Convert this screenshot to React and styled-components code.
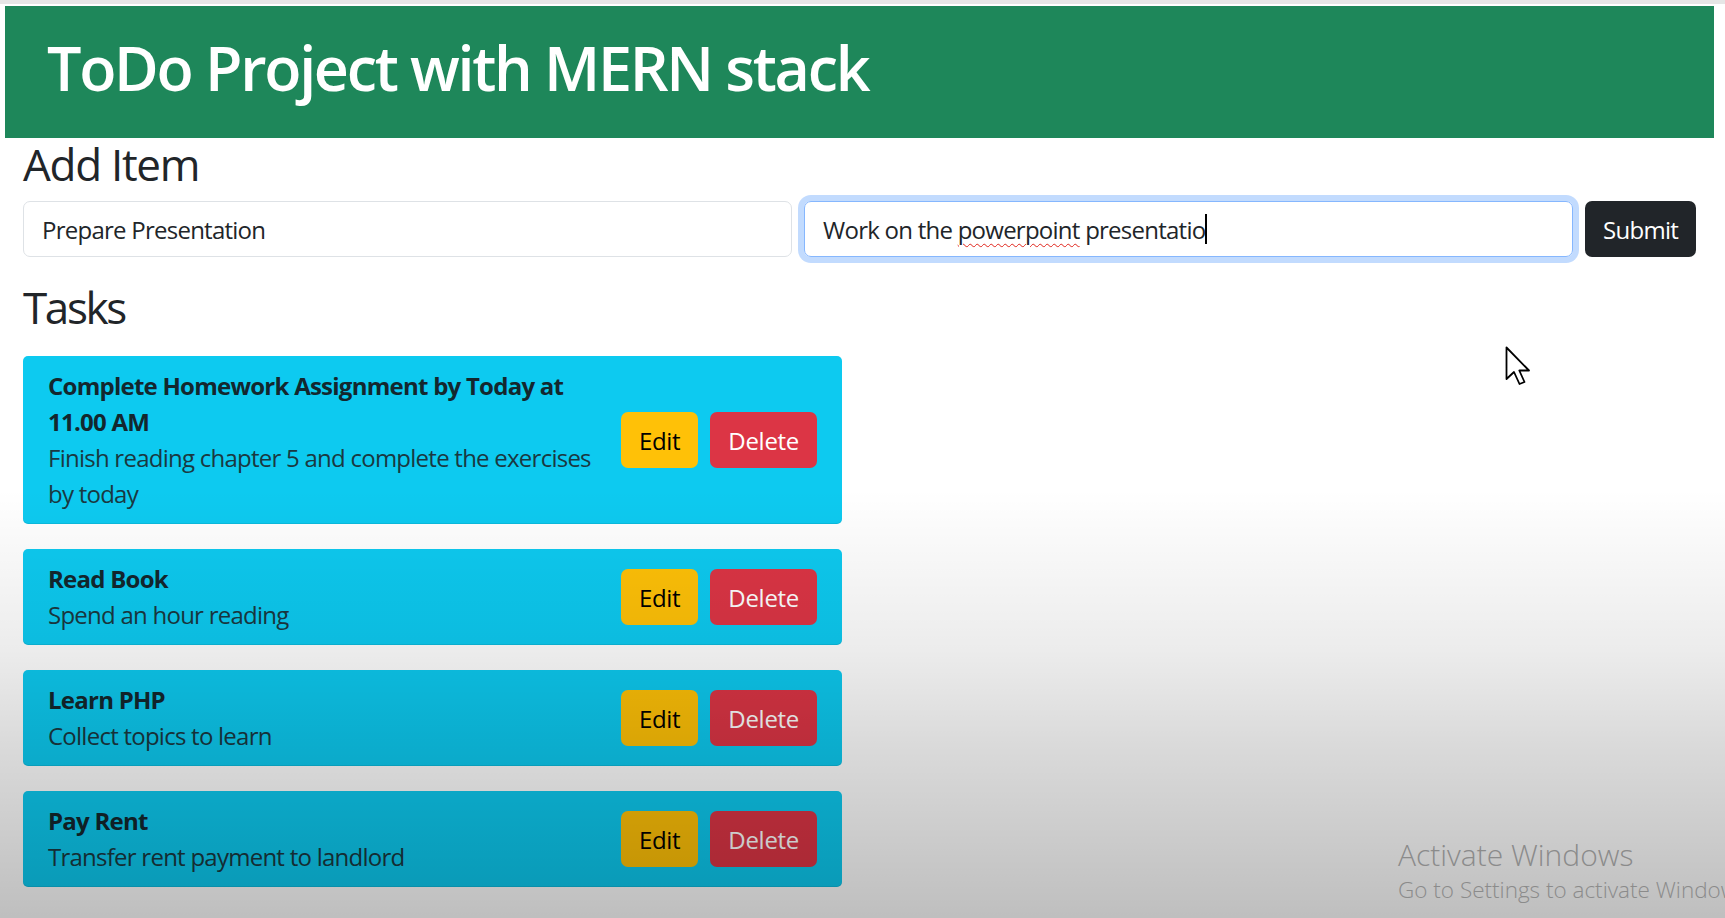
import React from 'react';
import styled, { createGlobalStyle } from 'styled-components';

const GlobalStyle = createGlobalStyle`
  html, body {
    margin: 0;
    padding: 0;
    background: #fff;
    overflow: hidden;
  }
  body {
    font-family: "Open Sans", "Noto Sans", sans-serif;
    color: #212529;
    letter-spacing: -0.75px;
  }
`;

const Page = styled.div`
  position: relative;
  min-height: 918px;
  border-top: 4px solid #e6e6e6;
  padding-top: 2px;
`;

const Header = styled.header`
  margin: 0 11px 0 5px;
  background: #1e875a;
  padding: 26px 42px 34px;
`;

const Title = styled.h1`
  margin: 0;
  color: #fff;
  font-size: 61px;
  font-weight: 600;
  line-height: 72px;
  letter-spacing: -2.3px;
`;

const Content = styled.main`
  padding: 0 29px 0 23px;
`;

const SectionTitle = styled.h2`
  margin: ${(p) => p.$margin};
  font-size: 44px;
  font-weight: 500;
  line-height: 52px;
  letter-spacing: ${(p) => p.$tracking || '-1.3px'};
`;

const FormRow = styled.div`
  display: flex;
  gap: 12px;
`;

const Field = styled.div`
  flex: 1;
  height: 56px;
  box-sizing: border-box;
  display: flex;
  align-items: center;
  padding: 0 18px;
  border: 1px solid ${(p) => (p.$focused ? '#86b7fe' : '#dee2e6')};
  border-radius: 7px;
  box-shadow: ${(p) => (p.$focused ? '0 0 0 6px rgba(13, 110, 253, 0.25)' : 'none')};
  font-size: 24px;
  white-space: pre;
  color: #212529;
`;

const Misspelt = styled.span`
  text-decoration: underline wavy #e0241b;
  text-decoration-thickness: 1px;
  text-underline-offset: 4px;
`;

const Caret = styled.span`
  display: inline-block;
  width: 2px;
  height: 30px;
  background: #000;
  vertical-align: middle;
`;

const SubmitButton = styled.button`
  height: 56px;
  padding: 0 18px;
  border: none;
  border-radius: 7px;
  background: #212529;
  color: #fff;
  font-family: inherit;
  font-size: 24px;
  letter-spacing: -0.75px;
`;

const TaskList = styled.div`
  width: 819px;
  display: flex;
  flex-direction: column;
  gap: 25px;
`;

const Card = styled.div`
  display: flex;
  align-items: center;
  gap: 12px;
  padding: 12px 25px;
  background: #0dcaf0;
  border-radius: 5px;
  box-shadow: inset 0 -1px 0 rgba(0, 0, 0, 0.08);
`;

const CardText = styled.div`
  flex: 1;
  font-size: 24px;
  line-height: 36px;
`;

const TaskName = styled.div`
  font-weight: 700;
  color: #13272e;
`;

const TaskDesc = styled.div`
  color: #1a3841;
`;

const Actions = styled.div`
  display: flex;
  gap: 12px;
  flex-shrink: 0;
`;

const ActionButton = styled.button`
  height: 56px;
  padding: 0 18px;
  border: none;
  border-radius: 7px;
  font-family: inherit;
  font-size: 24px;
  letter-spacing: -0.3px;
  background: ${(p) => (p.$variant === 'danger' ? '#dc3545' : '#ffc107')};
  color: ${(p) => (p.$variant === 'danger' ? '#fff' : '#000')};
`;

const Shade = styled.div`
  position: absolute;
  inset: 0;
  pointer-events: none;
  background: linear-gradient(
    to bottom,
    rgba(0, 0, 0, 0) 0,
    rgba(0, 0, 0, 0) 485px,
    rgba(0, 0, 0, 0.075) 645px,
    rgba(0, 0, 0, 0.145) 740px,
    rgba(0, 0, 0, 0.255) 918px
  );
`;

const Pointer = styled.svg`
  position: absolute;
  left: 1505px;
  top: 342px;
`;

const Watermark = styled.div`
  position: absolute;
  left: 1398px;
  top: 832px;
  white-space: nowrap;
  color: #8b8b8b;
  font-weight: 300;
  letter-spacing: 0;
`;

const WatermarkTitle = styled.div`
  font-size: 30px;
  line-height: 38px;
`;

const WatermarkHint = styled.div`
  font-size: 22.5px;
  line-height: 32px;
`;

const tasks = [
  {
    name: 'Complete Homework Assignment by Today at 11.00 AM',
    desc: 'Finish reading chapter 5 and complete the exercises by today',
  },
  { name: 'Read Book', desc: 'Spend an hour reading' },
  { name: 'Learn PHP', desc: 'Collect topics to learn' },
  { name: 'Pay Rent', desc: 'Transfer rent payment to landlord' },
];

export default function App() {
  return (
    <Page>
      <GlobalStyle />
      <Header>
        <Title>ToDo Project with MERN stack</Title>
      </Header>
      <Content>
        <SectionTitle $margin="0 0 11px">Add Item</SectionTitle>
        <FormRow>
          <Field>Prepare Presentation</Field>
          <Field $focused>
            Work on the <Misspelt>powerpoint</Misspelt> presentatio
            <Caret />
          </Field>
          <SubmitButton>Submit</SubmitButton>
        </FormRow>
        <SectionTitle $margin="24px 0 23px" $tracking="-2.4px">
          Tasks
        </SectionTitle>
        <TaskList>
          {tasks.map((t) => (
            <Card key={t.name}>
              <CardText>
                <TaskName>{t.name}</TaskName>
                <TaskDesc>{t.desc}</TaskDesc>
              </CardText>
              <Actions>
                <ActionButton>Edit</ActionButton>
                <ActionButton $variant="danger">Delete</ActionButton>
              </Actions>
            </Card>
          ))}
        </TaskList>
      </Content>
      <Pointer width="27" height="41" viewBox="0 0 27 41">
        <path
          d="M1.5 1.5 L1.5 33 L9 26 L14.5 38 L19.5 36 L14.3 24.5 L24 24.5 Z"
          fill="#fff"
          stroke="#000"
          strokeWidth="1.8"
          strokeLinejoin="round"
        />
      </Pointer>
      <Shade />
      <Watermark>
        <WatermarkTitle>Activate Windows</WatermarkTitle>
        <WatermarkHint>Go to Settings to activate Windows.</WatermarkHint>
      </Watermark>
    </Page>
  );
}
